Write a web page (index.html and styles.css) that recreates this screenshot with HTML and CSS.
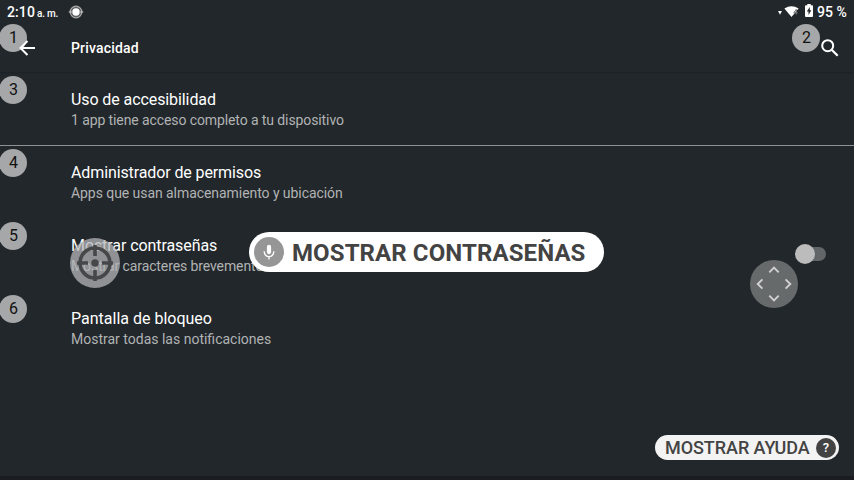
FILE: index.html
```
<!DOCTYPE html>
<html lang="es">
<head>
<meta charset="utf-8">
<title>Privacidad</title>
<link rel="stylesheet" href="styles.css">
</head>
<body>
<div class="screen">
  <header class="status">
    <span class="time">2:10</span><span class="ampm">a. m.</span>
    <svg class="status-dot" width="16" height="14" viewBox="0 0 16 14"><circle cx="8" cy="7" r="5.800" fill="#5d6164" stroke="#a8aaab" stroke-width="1.200"/><path d="M.8 7h3M12.200 7h3" stroke="#d5d6d6" stroke-width="1.200"/><circle cx="8" cy="7" r="3.700" fill="#fff"/></svg>
    <span class="spacer"></span>
    <svg class="wifi" width="22" height="14" viewBox="0 0 22 14"><path d="M0 6h4l-2 3.700z" fill="#fff"/><path d="M6.400 3.500Q13.500-.8 20.600 3.500L13.500 12z" fill="#fff"/><path d="M18.300 9.500V4.300l-2.500 3.500h3.800" fill="none" stroke="#777" stroke-width="1"/></svg>
    <svg class="battery" width="8" height="13" viewBox="0 0 8 13"><path d="M2.300 0h3.400v1.300H7q1 0 1 1V12q0 1-1 1H1q-1 0-1-1V2.300q0-1 1-1h1.300z" fill="#fff"/><path d="M4.800 3L1.800 7.600h1.700V11l2.900-4.700H4.800z" fill="#22272b"/></svg>
    <span class="percent">95 %</span>
  </header>
  <nav class="appbar">
    <span class="badge">1</span>
    <svg class="back" width="16" height="16" viewBox="0 0 16 16"><path d="M16 8H2M8.500 1L1.500 8l7 7" fill="none" stroke="#fff" stroke-width="2"/></svg>
    <h1>Privacidad</h1>
    <span class="badge badge-search">2</span>
    <svg class="search" width="18" height="18" viewBox="0 0 18 18"><circle cx="6.700" cy="6.700" r="5.500" fill="none" stroke="#fff" stroke-width="2"/><path d="M10.700 10.700l6 6" stroke="#fff" stroke-width="2.300"/></svg>
  </nav>
  <main>
    <section class="row divided"><span class="badge">3</span><h2 class="t1">Uso de accesibilidad</h2><p class="s1">1 app tiene acceso completo a tu dispositivo</p></section>
    <section class="row"><span class="badge">4</span><h2 class="t2">Administrador de permisos</h2><p class="s2">Apps que usan almacenamiento y ubicación</p></section>
    <section class="row"><span class="badge">5</span><h2 class="t3">Mostrar contraseñas</h2><p class="s3">Mostrar caracteres brevemente</p><span class="switch"></span></section>
    <section class="row"><span class="badge">6</span><h2>Pantalla de bloqueo</h2><p>Mostrar todas las notificaciones</p></section>
  </main>
  <svg class="target" width="50" height="50" viewBox="0 0 50 50"><circle cx="25" cy="25" r="25" fill="#b4b6b8" fill-opacity=".75"/><g fill="none" stroke="#454748" stroke-width="3.600"><circle cx="25" cy="25" r="15"/><path d="M25 7v11M25 32v11M7 25h11M32 25h11"/></g><circle cx="25" cy="25" r="3.700" fill="#454748"/></svg>
  <div class="command">
    <svg width="30" height="30" viewBox="0 0 30 30"><circle cx="15" cy="15" r="15" fill="#969696"/><rect x="12.900" y="7.800" width="4.200" height="9.400" rx="2.100" fill="#fff"/><path d="M10.200 14.300v.5a4.800 4.800 0 0 0 9.600 0v-.5M15 19.500v3" fill="none" stroke="#fff" stroke-width="1.300"/></svg>
    <span>MOSTRAR CONTRASEÑAS</span>
  </div>
  <svg class="pad" width="48" height="48" viewBox="0 0 48 48"><circle cx="24" cy="24" r="24" fill="#666a6b"/><path d="M19.300 12.400L24 7.700l4.700 4.700M19.300 35.600l4.700 4.700 4.700-4.700M12.400 19.300L7.700 24l4.700 4.700M35.600 19.300l4.700 4.700-4.700 4.700" fill="none" stroke="#d0d1d1" stroke-width="1.900"/></svg>
  <div class="help"><span>MOSTRAR AYUDA</span><b>?</b></div>
</div>
</body>
</html>
```
FILE: styles.css
```
* { box-sizing: border-box; }
body { margin: 0; background: #22272b; color: #fff; font-family: Roboto, sans-serif; }
.screen { position: relative; width: 854px; height: 480px; overflow: hidden; border-bottom: 4px solid #1b1c21; }
.status { display: flex; height: 24px; padding: 0 8px 0 7px; line-height: 25px; font-weight: 500; }
.time { font-size: 14px; letter-spacing: .1px; }
.ampm { margin-left: 2px; padding-top: 1px; font-size: 10px; width: 22px; white-space: nowrap; letter-spacing: -.2px; }
.status-dot { margin: 5px 0 0 9px; }
.spacer { flex: 1; }
.wifi { margin: 5px -1px 0 0; }
.battery { margin: 4px 4px 0 6px; }
.percent { font-size: 14px; width: 29px; white-space: nowrap; }
.appbar { position: relative; display: flex; align-items: center; height: 48px; padding: 0 15px 0 19px; box-shadow: 0 1px 1px #1d2226; }
.appbar h1 { margin: 0 auto 0 36px; font-size: 14px; font-weight: 500; letter-spacing: .18px; }
.badge { position: absolute; left: -1px; top: 4px; width: 28px; height: 28px; padding-left: 1px; border-radius: 50%; background: #a6a7a8; color: #111; font-size: 16px; line-height: 28px; text-align: center; }
.appbar .badge { top: 0; }
.appbar .badge-search { left: 792px; }
.back, .search { position: relative; }
.row { position: relative; height: 73px; padding: 18px 0 0 71px; }
.divided { height: 74px; margin-bottom: -1px; border-bottom: 1px solid #8f9294; }
.row h2 { margin: 0; font-size: 16px; line-height: 20px; font-weight: 400; }
.row p { margin: 0; font-size: 14px; line-height: 20px; color: #b1b3b4; }
.row .t1 { letter-spacing: -.09px; }
.row .t2 { letter-spacing: -.11px; }
.row .t3 { letter-spacing: -.08px; }
.row .s1 { letter-spacing: -.1px; }
.row .s2 { letter-spacing: -.06px; }
.row .s3 { letter-spacing: -.1px; }
.switch { position: absolute; left: 800px; top: 29px; width: 26px; height: 14px; border-radius: 7px; background: #626668; }
.switch::before { content: ""; position: absolute; left: -5px; top: -3px; width: 20px; height: 20px; border-radius: 50%; background: #bcbcbc; }
.target { position: absolute; left: 70px; top: 238px; }
.pad { position: absolute; left: 750px; top: 260px; }
.command { position: absolute; left: 249px; top: 232px; display: flex; align-items: center; width: 355px; height: 40px; padding-left: 5px; border-radius: 20px; background: #fff; color: #434343; font-size: 24px; font-weight: 700; letter-spacing: .1px; white-space: nowrap; }
.command span { margin-left: 8px; padding-top: 2px; }
.help { position: absolute; left: 655px; top: 435px; display: flex; align-items: center; justify-content: space-between; width: 184px; height: 25px; padding: 0 3px 0 10px; border-radius: 13px; background: #f3f3f3; color: #434343; font-size: 18px; font-weight: 500; letter-spacing: -.06px; white-space: nowrap; }
.help b { width: 20px; height: 20px; border-radius: 50%; background: #434343; color: #fff; font-size: 13px; font-weight: 500; line-height: 20px; text-align: center; }
```
